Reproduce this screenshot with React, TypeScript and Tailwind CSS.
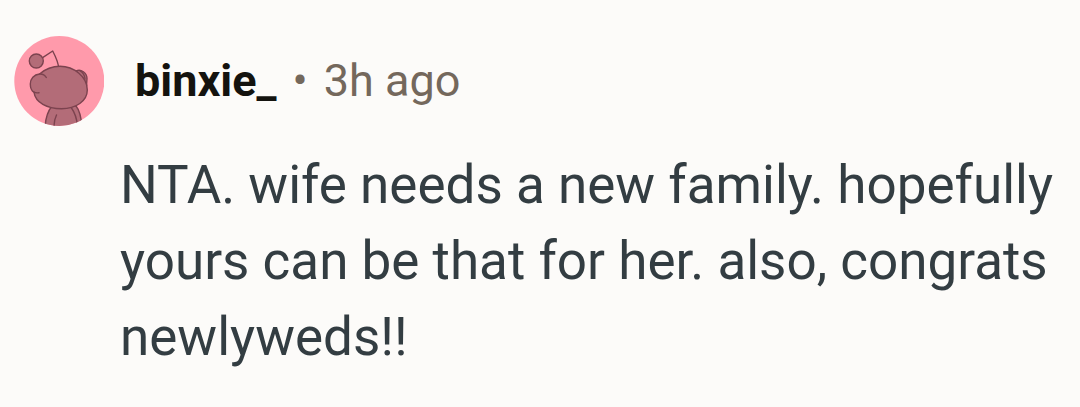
export default function App() {
  return (
    <main className="min-h-screen bg-[#fcfbf9] pl-[14px] pr-4 pt-9 font-['Roboto',sans-serif]">
      <article>
        <header className="flex items-center">
          <svg viewBox="0 0 90 90" className="size-[90px] shrink-0" role="img" aria-label="avatar">
            <defs>
              <clipPath id="disc"><circle cx="45.3" cy="45" r="45" /></clipPath>
            </defs>
            <g clipPath="url(#disc)">
              <rect width="91" height="90" fill="#ff9aab" />
              <g fill="#b36c78" stroke="#7c434f" strokeWidth="1.4" strokeLinecap="round" strokeLinejoin="round">
                <path d="M44.6 32 Q44.4 26 38.7 15 L29 21.3" fill="none" />
                <circle cx="22.3" cy="25" r="7" />
                <path d="M31 92 Q31.5 78 38 70 H62 Q67 76 68 92Z" />
                <path d="M42.5 79 Q40 84 40 91 M57.5 72 Q62.5 79 63.7 91" fill="none" />
                <path d="M62 35 C67 32.5 73 37 73 42.5 L72.5 50Z" />
                <path d="M25.5 38 C32 32.5 38 30.3 46 30.3 C60 30.3 73.3 41 73.3 54 C73.3 65 62 72.7 47.5 72.7 C33 72.7 21.5 66.5 20 56.3 C17 54.5 16.3 51 16.3 48 C16.3 43 20 38.5 25.5 38Z" />
                <path d="M25.5 38 Q30 37.6 32.3 41.5 M20 56 Q22 57.3 25 56.7 M66 34.8 Q70.5 37 71 43" fill="none" />
              </g>
            </g>
          </svg>
          <div className="ml-[31px] flex items-center text-[45px] leading-[52px]">
            <a href="#user" className="font-bold text-[#14130f]">binxie_</a>
            <span className="mx-4 text-[#74685c]">•</span>
            <time className="text-[#74685c]">3h ago</time>
          </div>
        </header>
        <p className="ml-[106px] mt-[21px] text-[53px] leading-[76px] text-[#333d42]">
          NTA. wife needs a new family. hopefully yours can be that for her. also, congrats newlyweds!!
        </p>
      </article>
    </main>
  );
}
